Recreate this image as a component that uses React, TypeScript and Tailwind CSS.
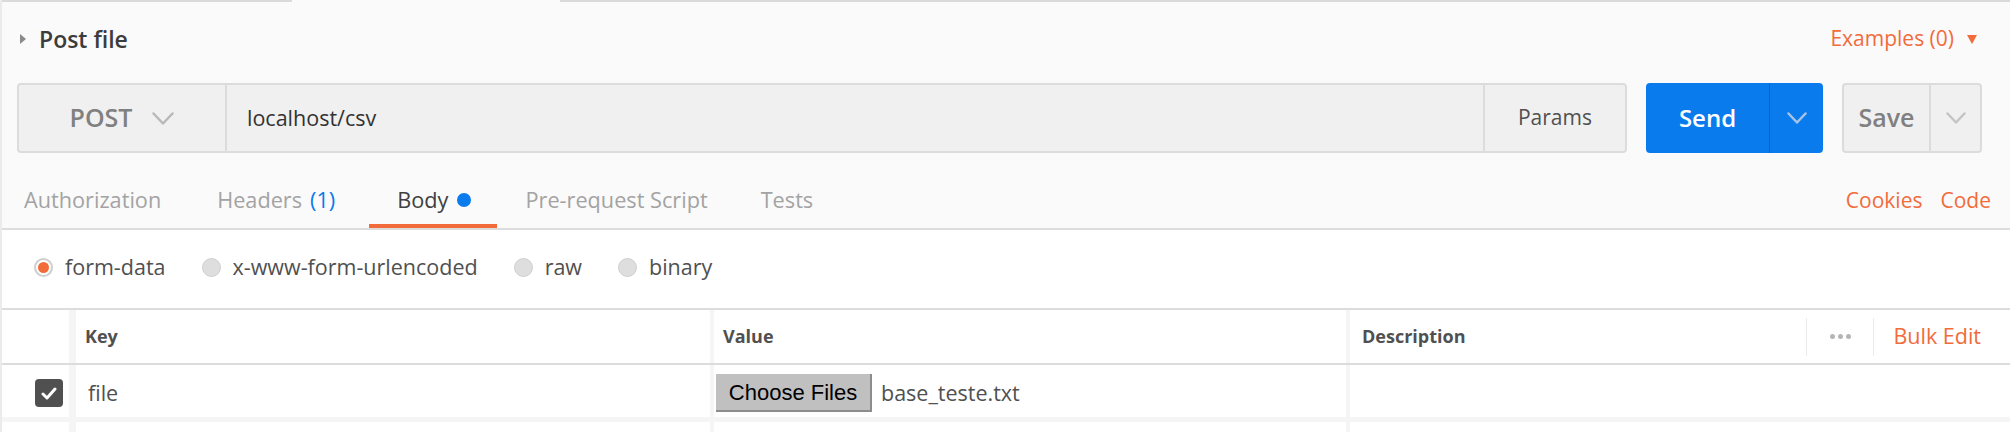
import React from 'react';

const ORANGE = 'text-[#f26b3a]';

const Chevron = ({ w, h, color, stroke = 2.5 }: { w: number; h: number; color: string; stroke?: number }) => (
    <svg width={w} height={h} viewBox={`0 0 ${w} ${h}`} fill="none">
        <polyline points={`1.5,1.5 ${w / 2},${h - 1.5} ${w - 1.5},1.5`} stroke={color} strokeWidth={stroke} strokeLinecap="round" strokeLinejoin="round" />
    </svg>
);

const Radio = ({ label, checked }: { label: string; checked?: boolean }) => (
    <div className="flex items-center gap-[12px]">
        {checked ? (
            <div className="w-[19px] h-[19px] rounded-full border-2 border-[#cfcfcf] bg-white flex items-center justify-center">
                <div className="w-[11px] h-[11px] rounded-full bg-[#f26b3a]" />
            </div>
        ) : (
            <div className="w-[19px] h-[19px] rounded-full border border-[#cfcfcf] bg-[#dedede]" />
        )}
        <span className="text-[21.5px] text-[#505050]">{label}</span>
    </div>
);

const Tab = ({ children, active, className = '' }: { children: React.ReactNode; active?: boolean; className?: string }) => (
    <div
        className={`flex items-center text-[21.7px] border-b-4 ${active ? 'border-[#f26b3a] text-[#404040]' : 'border-transparent text-[#a3a3a3]'} ${className}`}
    >
        {children}
    </div>
);

export default function App() {
    return (
        <div className="w-[2010px] h-[432px] overflow-hidden bg-white border-l-2 border-[#ebebeb] font-['Open_Sans',sans-serif]">
            {/* Request header area */}
            <div className="bg-[#fafafa] border-b-2 border-[#dcdcdc]">
                <div className="flex h-[2px]">
                    <div className="w-[290px] bg-[#dadada]" />
                    <div className="w-[268px]" />
                    <div className="flex-1 bg-[#dadada]" />
                </div>

                <div className="flex items-center justify-between h-[74px] pl-[18px] pr-[33px]">
                    <div className="flex items-center">
                        <svg width="6" height="10" viewBox="0 0 6 10" className="mr-[13px]">
                            <polygon points="0,0 6,5 0,10" fill="#8a8a8a" />
                        </svg>
                        <span className="text-[23px] font-semibold text-[#3c3c3c]">Post file</span>
                    </div>
                    <div className={`flex items-center ${ORANGE}`}>
                        <span className="text-[21px]">Examples (0)</span>
                        <svg width="10" height="9" viewBox="0 0 10 9" className="ml-[13px]">
                            <polygon points="0,0 10,0 5,9" fill="#f26b3a" />
                        </svg>
                    </div>
                </div>

                <div className="flex mt-[7px] h-[70px] pl-[15px] pr-[28px] gap-[19px]">
                    <div className="flex-1 flex rounded-[4px] border-2 border-[#dcdcdc] bg-[#f0f0f0]">
                        <div className="w-[208px] border-r-2 border-[#dcdcdc] flex items-center justify-center gap-[20px]">
                            <span className="text-[25px] font-semibold text-[#808080]">POST</span>
                            <Chevron w={22} h={13} color="#b8b8b8" />
                        </div>
                        <div className="flex-1 flex items-center pl-[20px] text-[21.5px] text-[#333333]">localhost/csv</div>
                        <div className="w-[142px] border-l-2 border-[#dcdcdc] flex items-center justify-center text-[21px] text-[#505050]">
                            Params
                        </div>
                    </div>

                    <div className="w-[177px] flex rounded-[4px] bg-[#097bed]">
                        <div className="w-[123px] flex items-center justify-center text-[24px] font-semibold text-white">Send</div>
                        <div className="flex-1 border-l border-[#0a62c4] flex items-center justify-center">
                            <Chevron w={20} h={12} color="#a9c3e3" />
                        </div>
                    </div>

                    <div className="w-[140px] flex rounded-[4px] border-2 border-[#dcdcdc] bg-[#f0f0f0]">
                        <div className="w-[85px] flex items-center justify-center text-[25px] font-semibold text-[#808080]">Save</div>
                        <div className="flex-1 border-l-2 border-[#dcdcdc] flex items-center justify-center">
                            <Chevron w={20} h={12} color="#c4c4c4" />
                        </div>
                    </div>
                </div>

                <div className="flex justify-between mt-[23px] h-[52px]">
                    <div className="flex">
                        <Tab className="pl-[22px] pr-[28px]">Authorization</Tab>
                        <Tab className="pl-[28px] pr-[34px]">
                            Headers<span className="ml-[8px] text-[#097bed]">(1)</span>
                        </Tab>
                        <Tab active className="pl-[28px] pr-[26px]">
                            Body
                            <span className="ml-[9px] w-[14px] h-[14px] rounded-full bg-[#097bed]" />
                        </Tab>
                        <Tab className="pl-[28px] pr-[25px]">Pre-request Script</Tab>
                        <Tab className="px-[28px]">Tests</Tab>
                    </div>
                    <div className={`flex items-center gap-[18px] pr-[19px] pb-[2px] text-[21px] ${ORANGE}`}>
                        <span>Cookies</span>
                        <span>Code</span>
                    </div>
                </div>
            </div>

            {/* Body type */}
            <div className="flex items-center h-[78px] pb-[4px] pl-[32px] gap-[36px]">
                <Radio label="form-data" checked />
                <Radio label="x-www-form-urlencoded" />
                <Radio label="raw" />
                <Radio label="binary" />
            </div>

            {/* Key / value table */}
            <div className="border-t-2 border-[#dcdcdc]">
                <div className="flex h-[55px] border-b-2 border-[#dcdcdc]">
                    <div className="w-[74px] border-r-[7px] border-[#f5f5f5]" />
                    <div className="w-[638px] border-r-4 border-[#f5f5f5] flex items-center pl-[9px] text-[18px] font-bold text-[#505050]">Key</div>
                    <div className="w-[636px] border-r-4 border-[#f5f5f5] flex items-center pl-[9px] text-[18px] font-bold text-[#505050]">Value</div>
                    <div className="flex-1 flex items-center">
                        <span className="pl-[12px] text-[18px] font-bold text-[#505050]">Description</span>
                        <div className="ml-auto flex items-center">
                            <div className="w-[68px] h-[38px] border-x border-[#ececec] flex items-center justify-center gap-[3px]">
                                <span className="w-[5px] h-[5px] rounded-full bg-[#b5b5b5]" />
                                <span className="w-[5px] h-[5px] rounded-full bg-[#b5b5b5]" />
                                <span className="w-[5px] h-[5px] rounded-full bg-[#b5b5b5]" />
                            </div>
                            <span className={`pl-[19px] pr-[29px] text-[21.5px] ${ORANGE}`}>Bulk Edit</span>
                        </div>
                    </div>
                </div>

                <div className="flex h-[57px] border-b-[5px] border-[#f5f5f5]">
                    <div className="w-[74px] border-r-[7px] border-[#f5f5f5] flex items-center pl-[33px] pt-[4px]">
                        <div className="w-[28px] h-[28px] rounded-[4px] bg-[#505050] flex items-center justify-center">
                            <svg width="16" height="13" viewBox="0 0 16 13" fill="none">
                                <polyline points="2,7 6,11 14,2" stroke="#ffffff" strokeWidth="3" strokeLinecap="round" strokeLinejoin="round" />
                            </svg>
                        </div>
                    </div>
                    <div className="w-[638px] border-r-4 border-[#f5f5f5] flex items-center pl-[12px] pt-[4px] text-[21.5px] text-[#505050]">file</div>
                    <div className="w-[636px] border-r-4 border-[#f5f5f5] flex items-center pl-[2px] pt-[4px]">
                        <div className="w-[156px] h-[38px] bg-[#c0c0c0] border-r-2 border-b-2 border-[#8c8c8c] flex items-center justify-center font-['Liberation_Sans',Arial,sans-serif] text-[22px] text-black">
                            Choose Files
                        </div>
                        <span className="ml-[9px] text-[21.5px] text-[#505050]">base_teste.txt</span>
                    </div>
                    <div className="flex-1" />
                </div>

                <div className="flex h-[20px]">
                    <div className="w-[74px] border-r-[7px] border-[#f5f5f5]" />
                    <div className="w-[638px] border-r-4 border-[#f5f5f5]" />
                    <div className="w-[636px] border-r-4 border-[#f5f5f5]" />
                    <div className="flex-1" />
                </div>
            </div>
        </div>
    );
}
